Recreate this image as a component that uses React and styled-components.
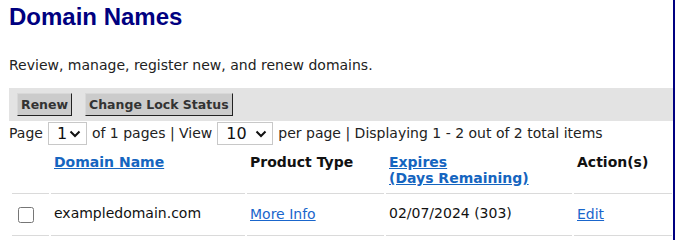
import React from "react";
import styled, { createGlobalStyle } from "styled-components";

const GlobalStyle = createGlobalStyle`
  html, body {
    margin: 0;
    padding: 0;
    background: #fff;
  }
  body {
    font-family: "DejaVu Sans", Verdana, sans-serif;
    font-size: 14px;
    color: #222;
  }
`;

const Chevron = () => (
  <svg width="12" height="8" viewBox="0 0 12 8">
    <path d="M1.5 1.5 L6 6 L10.5 1.5" fill="none" stroke="#111" strokeWidth="2" />
  </svg>
);

const App = () => {
  return (
    <Page>
      <GlobalStyle />
      <Content>
        <Title>Domain Names</Title>
        <Intro>Review, manage, register new, and renew domains.</Intro>
        <Toolbar>
          <ToolButton>Renew</ToolButton>
          <ToolButton>Change Lock Status</ToolButton>
        </Toolbar>
        <Pager>
          Page
          <SelectWrap $width={39}>
            <Select defaultValue="1">
              <option value="1">1</option>
            </Select>
            <Arrow>
              <Chevron />
            </Arrow>
          </SelectWrap>
          of 1 pages | View
          <SelectWrap $width={56}>
            <Select defaultValue="10">
              <option value="10">10</option>
              <option value="25">25</option>
            </Select>
            <Arrow>
              <Chevron />
            </Arrow>
          </SelectWrap>
          per page | Displaying 1 - 2 out of 2 total items
        </Pager>
        <Table>
          <colgroup>
            <col style={{ width: 37 }} />
            <col style={{ width: 194 }} />
            <col style={{ width: 137 }} />
            <col style={{ width: 186 }} />
            <col />
          </colgroup>
          <thead>
            <tr>
              <HeadCell />
              <HeadCell>
                <SortLink href="#">Domain Name</SortLink>
              </HeadCell>
              <HeadCell>Product Type</HeadCell>
              <HeadCell>
                <SortLink href="#">
                  Expires
                  <br />
                  (Days Remaining)
                </SortLink>
              </HeadCell>
              <HeadCell>Action(s)</HeadCell>
            </tr>
          </thead>
          <tbody>
            <tr>
              <Cell $pad={6}>
                <Check type="checkbox" />
              </Cell>
              <Cell>exampledomain.com</Cell>
              <Cell>
                <RowLink href="#">More Info</RowLink>
              </Cell>
              <Cell>02/07/2024 (303)</Cell>
              <Cell>
                <RowLink href="#">Edit</RowLink>
              </Cell>
            </tr>
          </tbody>
        </Table>
      </Content>
    </Page>
  );
};

export default App;

const Page = styled.div`
  width: 676px;
  height: 240px;
  overflow: hidden;
  padding-left: 9px;
  box-sizing: border-box;
`;

const Content = styled.div`
  width: 666px;
  min-height: 240px;
  border-right: 2px solid #000080;
  box-sizing: border-box;
`;

const Title = styled.h1`
  margin: 0;
  padding-top: 3px;
  font-family: "Liberation Sans", Arial, sans-serif;
  font-size: 24px;
  font-weight: bold;
  line-height: 28px;
  color: #000080;
`;

const Intro = styled.p`
  margin: 26px 0 0;
  line-height: 17px;
  color: #222;
`;

const Toolbar = styled.div`
  margin-top: 14px;
  height: 33px;
  background: #e3e3e3;
  display: flex;
  align-items: center;
  gap: 13px;
  padding-left: 8px;
`;

const ToolButton = styled.button`
  height: 23px;
  padding: 0 3px;
  background: #cbcbcb;
  border: 1px solid #d8d8d8;
  border-right-color: #222;
  border-bottom-color: #222;
  font-family: "DejaVu Sans", Verdana, sans-serif;
  font-size: 12.5px;
  font-weight: bold;
  color: #333;
  cursor: pointer;
`;

const Pager = styled.div`
  display: flex;
  align-items: center;
  gap: 5px;
  height: 24px;
  white-space: nowrap;
  color: #222;
`;

const SelectWrap = styled.span`
  position: relative;
  display: inline-block;
  width: ${(p) => p.$width}px;
  height: 23px;
`;

const Select = styled.select`
  appearance: none;
  width: 100%;
  height: 100%;
  box-sizing: border-box;
  border: 1px solid #c8c8c8;
  border-radius: 0;
  background: #fff;
  padding: 0 0 0 8px;
  font-family: "DejaVu Sans", Verdana, sans-serif;
  font-size: 16px;
  color: #111;
`;

const Arrow = styled.span`
  position: absolute;
  right: 6px;
  top: 8px;
  pointer-events: none;
  line-height: 0;
`;

const Table = styled.table`
  margin: 4px 0 0 1px;
  border-collapse: separate;
  border-spacing: 2px 0;
  width: 664px;
  table-layout: fixed;
`;

const HeadCell = styled.th`
  text-align: left;
  vertical-align: top;
  padding: 5px 3px 7px;
  height: 32px;
  line-height: 16px;
  font-weight: bold;
  color: #111;
  border-bottom: 1px solid #dadada;
`;

const Cell = styled.td`
  padding: 11px 3px 12px ${(p) => (p.$pad ? p.$pad : 3)}px;
  height: 17px;
  line-height: 17px;
  vertical-align: top;
  text-align: left;
  border-bottom: 1px solid #dadada;
  color: #111;
`;

const SortLink = styled.a`
  color: #1565c0;
  text-decoration: underline;
`;

const RowLink = styled.a`
  display: inline-block;
  padding-top: 1px;
  color: #1a66cc;
  text-decoration: underline;
`;

const Check = styled.input`
  display: block;
  width: 16px;
  height: 16px;
  margin: 2px 0 -1px;
`;
